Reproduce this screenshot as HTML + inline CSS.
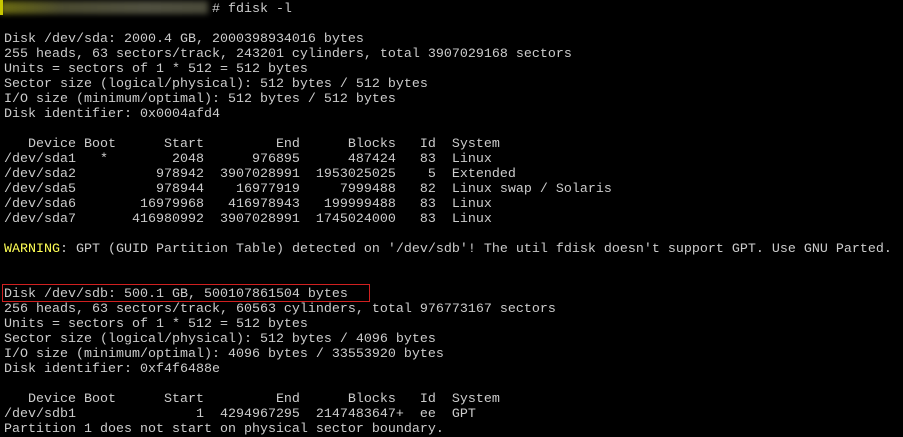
<!DOCTYPE html>
<html><head><meta charset="utf-8"><style>
html,body{margin:0;padding:0;background:#000;width:903px;height:433px;overflow:hidden}
pre{margin:0;position:absolute;left:4px;top:2px;font-family:"Liberation Mono",monospace;font-size:13.33px;line-height:15px;color:#cccccc;white-space:pre}
.y{color:#ffff55}
.blur{position:absolute;left:0;top:1px;width:208px;height:13px;background:linear-gradient(90deg,#6a6a10,#4a4a30 30%,#505040 70%,#4a4a3a);filter:blur(3px)}
.bar{position:absolute;left:0;top:0;width:3px;height:15px;background:#c8c800}
.box{position:absolute;left:2px;top:284px;width:366px;height:16px;border:1px solid #d02020}
</style></head><body>
<div class="blur"></div><div class="bar"></div>
<pre>                          # fdisk -l

Disk /dev/sda: 2000.4 GB, 2000398934016 bytes
255 heads, 63 sectors/track, 243201 cylinders, total 3907029168 sectors
Units = sectors of 1 * 512 = 512 bytes
Sector size (logical/physical): 512 bytes / 512 bytes
I/O size (minimum/optimal): 512 bytes / 512 bytes
Disk identifier: 0x0004afd4

   Device Boot      Start         End      Blocks   Id  System
/dev/sda1   *        2048      976895      487424   83  Linux
/dev/sda2          978942  3907028991  1953025025    5  Extended
/dev/sda5          978944    16977919     7999488   82  Linux swap / Solaris
/dev/sda6        16979968   416978943   199999488   83  Linux
/dev/sda7       416980992  3907028991  1745024000   83  Linux

<span class="y">WARNING</span>: GPT (GUID Partition Table) detected on '/dev/sdb'! The util fdisk doesn't support GPT. Use GNU Parted.


Disk /dev/sdb: 500.1 GB, 500107861504 bytes
256 heads, 63 sectors/track, 60563 cylinders, total 976773167 sectors
Units = sectors of 1 * 512 = 512 bytes
Sector size (logical/physical): 512 bytes / 4096 bytes
I/O size (minimum/optimal): 4096 bytes / 33553920 bytes
Disk identifier: 0xf4f6488e

   Device Boot      Start         End      Blocks   Id  System
/dev/sdb1               1  4294967295  2147483647+  ee  GPT
Partition 1 does not start on physical sector boundary.</pre>
<div class="box"></div>
</body></html>
